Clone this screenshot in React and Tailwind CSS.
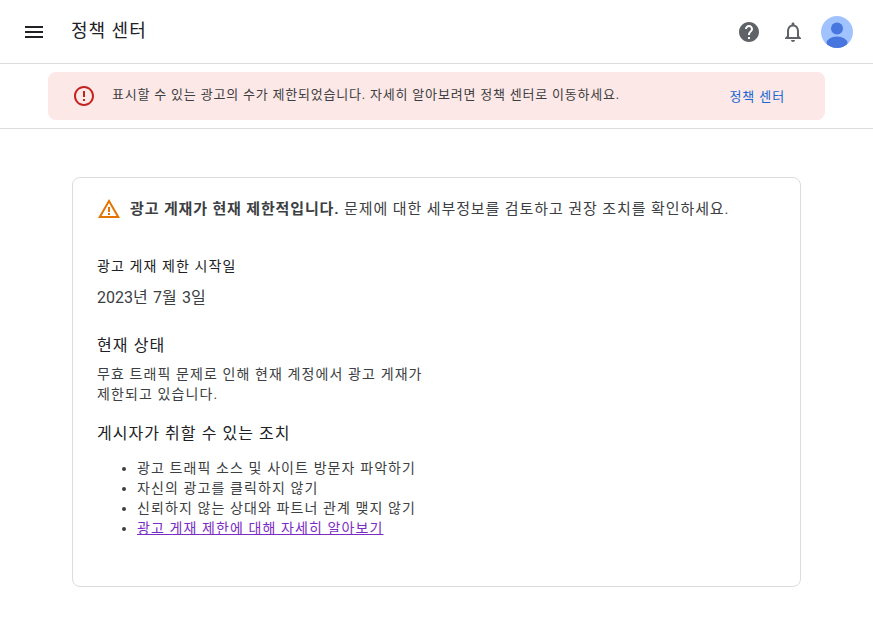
import React from "react";

export default function App() {
  return (
    <div className="min-h-[639px] bg-white font-['Roboto','Noto_Sans_CJK_KR',sans-serif] text-[#3c4043]">
      <header className="h-16 border-b border-[#dadce0] flex items-center pl-[22px] pr-5">
        <svg width="24" height="24" viewBox="0 0 24 24" className="mr-[25px]">
          <path d="M3 18h18v-2H3v2zm0-5h18v-2H3v2zm0-7v2h18V6H3z" fill="#202124" />
        </svg>
        <div className="text-[18px] leading-6 tracking-[1px] text-[#202124] -mt-[1px]">정책 센터</div>
        <div className="ml-auto flex items-center">
          <svg width="24" height="24" viewBox="0 0 24 24" className="mr-5">
            <path fill="#5f6368" d="M12 2C6.48 2 2 6.48 2 12s4.48 10 10 10 10-4.48 10-10S17.52 2 12 2zm1 17h-2v-2h2v2zm2.07-7.75l-.9.92C13.45 12.9 13 13.5 13 15h-2v-.5c0-1.1.45-2.1 1.17-2.83l1.24-1.26c.37-.36.59-.86.59-1.41 0-1.1-.9-2-2-2s-2 .9-2 2H8c0-2.21 1.79-4 4-4s4 1.79 4 4c0 .88-.36 1.68-.93 2.25z" />
          </svg>
          <svg width="24" height="24" viewBox="0 0 24 24" className="mr-4">
            <path fill="#5f6368" d="M12 22c1.1 0 2-.9 2-2h-4c0 1.1.9 2 2 2zm6-6v-5c0-3.07-1.63-5.64-4.5-6.32V4c0-.83-.67-1.5-1.5-1.5s-1.5.67-1.5 1.5v.68C7.64 5.36 6 7.92 6 11v5l-2 2v1h16v-1l-2-2zm-2 1H8v-6c0-2.48 1.51-4.5 4-4.5s4 2.02 4 4.5v6z" />
          </svg>
          <svg width="32" height="32" viewBox="0 0 32 32">
            <defs>
              <clipPath id="avatar-clip"><circle cx="16" cy="16" r="16" /></clipPath>
            </defs>
            <g clipPath="url(#avatar-clip)">
              <rect width="32" height="32" fill="#a0c3ff" />
              <circle cx="16" cy="12.5" r="6" fill="#4676de" />
              <ellipse cx="16" cy="27" rx="10.5" ry="6.5" fill="#4676de" />
            </g>
          </svg>
        </div>
      </header>

      <div className="h-[65px] border-b border-[#dadce0] px-12 pt-2">
        <div className="h-12 bg-[#fce8e6] rounded-lg flex items-center pl-6 pr-10">
          <svg width="24" height="24" viewBox="0 0 24 24" className="mr-[16px] shrink-0">
            <path fill="#c5221f" d="M11 15h2v2h-2zm0-8h2v6h-2zm.99-5C6.47 2 2 6.48 2 12s4.47 10 9.99 10C17.52 22 22 17.52 22 12S17.52 2 11.99 2zM12 20c-4.42 0-8-3.58-8-8s3.58-8 8-8 8 3.58 8 8-3.58 8-8 8z" />
          </svg>
          <div className="text-[13px] leading-5 tracking-[0.8px] -mt-[2px] whitespace-nowrap">표시할 수 있는 광고의 수가 제한되었습니다. 자세히 알아보려면 정책 센터로 이동하세요.</div>
          <div className="ml-auto text-[13px] leading-5 tracking-[0.9px] text-[#1967d2] whitespace-nowrap mt-[1px]">정책 센터</div>
        </div>
      </div>

      <main className="px-[72px] pt-[48px]">
        <section className="h-[410px] border border-[#dadce0] rounded-lg pl-6 pr-6 pt-[19px]">
          <div className="flex items-center h-6">
            <svg width="24" height="24" viewBox="0 0 24 24" className="mr-[9px] shrink-0">
              <path fill="#e37400" d="M1 21h22L12 2 1 21zm3.47-2L12 6l7.53 13H4.47zM11 16h2v2h-2zm0-6h2v5h-2z" />
            </svg>
            <p className="text-[15px] leading-5 tracking-[0.9px] whitespace-nowrap"><strong className="font-bold tracking-[0.85px]">광고 게재가 현재 제한적입니다.</strong> 문제에 대한 세부정보를 검토하고 권장 조치를 확인하세요.</p>
          </div>

          <div className="mt-[35px] text-[14px] leading-5 tracking-[1.1px] text-[#202124]">광고 게재 제한 시작일</div>
          <div className="mt-[10px] text-[16px] leading-6 text-[#3c4043]">
            2023<span className="tracking-[1.3px]">년</span> 7<span className="tracking-[1.3px]">월</span> 3<span className="tracking-[1.3px]">일</span>
          </div>

          <h2 className="mt-[24px] text-[16px] leading-6 tracking-[1.1px] font-normal text-[#202124]">현재 상태</h2>
          <p className="mt-[6px] w-[340px] text-[14px] leading-[20px] tracking-[1.1px] break-keep">무효 트래픽 문제로 인해 현재 계정에서 광고 게재가 제한되고 있습니다.</p>

          <h2 className="mt-[18px] text-[16px] leading-6 tracking-[1.05px] font-normal text-[#202124]">게시자가 취할 수 있는 조치</h2>
          <ul className="mt-[12px] pl-10 list-disc text-[14px] leading-5 tracking-[1.1px]">
            <li>광고 트래픽 소스 및 사이트 방문자 파악하기</li>
            <li>자신의 광고를 클릭하지 않기</li>
            <li>신뢰하지 않는 상대와 파트너 관계 맺지 않기</li>
            <li><a className="underline text-[#7b2cc4]">광고 게재 제한에 대해 자세히 알아보기</a></li>
          </ul>
        </section>
      </main>
    </div>
  );
}
